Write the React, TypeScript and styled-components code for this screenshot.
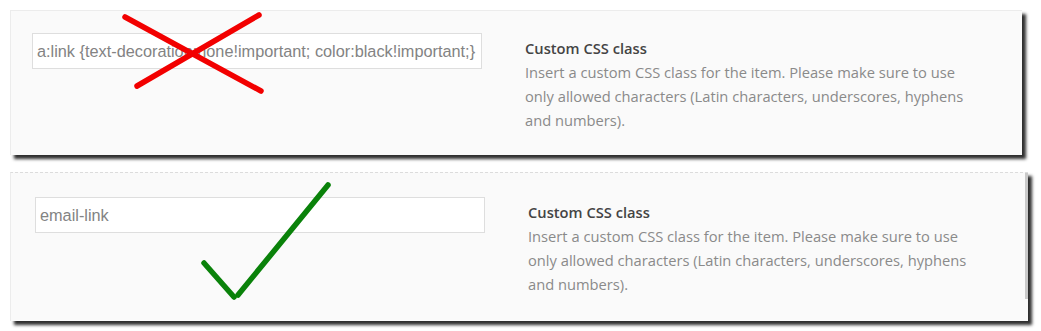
import React from "react";
import styled, { createGlobalStyle } from "styled-components";

const Global = createGlobalStyle`
  html, body { margin: 0; padding: 0; background: #ffffff; }
  body { width: 1041px; height: 331px; overflow: hidden; }
`;

const Page = styled.div`
  display: flex;
  flex-direction: column;
  padding: 10px 0 0 10px;
  gap: 17px;
`;

const Panel = styled.section<{ $w: number; $h: number; $dashed?: boolean }>`
  position: relative;
  box-sizing: border-box;
  width: ${(p) => p.$w}px;
  height: ${(p) => p.$h}px;
  background: #fafafa;
  border-left: 1px solid #ececec;
  border-top: ${(p) => (p.$dashed ? "1px dashed #dcdcdc" : "1px solid #ececec")};
  box-shadow: 4px 4px 3px rgba(10, 10, 10, 0.85);
  display: flex;
  align-items: flex-start;
  padding: ${(p) => (p.$dashed ? "24px 0 0 24px" : "22px 0 0 21px")};
  gap: 43px;
`;

const ScrollStrip = styled.div`
  position: absolute;
  right: 0;
  top: 0;
  width: 3px;
  height: 126px;
  background: #c9c9c9;
`;

const Field = styled.div`
  box-sizing: border-box;
  flex: none;
  width: 450px;
  height: 36px;
  background: #ffffff;
  border: 1px solid #dedede;
  display: flex;
  align-items: center;
  padding-left: 4px;
  font-family: "Liberation Sans", Arial, sans-serif;
  font-size: 16.3px;
  color: #838383;
  white-space: nowrap;
  overflow: hidden;
`;

const Info = styled.div<{ $top: number }>`
  margin-top: ${(p) => p.$top}px;
  width: 480px;
  font-family: "Open Sans", "Noto Sans", sans-serif;
  font-size: 14.7px;
  line-height: 24px;
  white-space: nowrap;
`;

const Title = styled.div`
  font-weight: 600;
  color: #444444;
`;

const Desc = styled.div`
  color: #8a8a8a;
`;

const Mark = styled.svg`
  position: absolute;
  left: 0;
  top: 0;
  overflow: visible;
  pointer-events: none;
`;

const InfoBlock = ({ top }: { top: number }) => (
  <Info $top={top}>
    <Title>Custom CSS class</Title>
    <Desc>
      Insert a custom CSS class for the item. Please make sure to use
      <br />
      only allowed characters (Latin characters, underscores, hyphens
      <br />
      and numbers).
    </Desc>
  </Info>
);

export default function App() {
  return (
    <>
      <Global />
      <Page>
        <Panel $w={1012} $h={145}>
          <Field>a:link {"{"}text-decoration:none!important; color:black!important;{"}"}</Field>
          <InfoBlock top={3} />
          <Mark width="1" height="1">
            <g stroke="#f20000" strokeWidth="5.5" strokeLinecap="round">
              <line x1="114" y1="6" x2="250" y2="80" />
              <line x1="126" y1="75" x2="248" y2="4" />
            </g>
          </Mark>
        </Panel>
        <Panel $w={1018} $h={149} $dashed>
          <Field>email-link</Field>
          <InfoBlock top={3} />
          <ScrollStrip />
          <Mark width="1" height="1">
            <g stroke="#0a820a" strokeWidth="5.5" strokeLinecap="round" fill="none">
              <line x1="193" y1="90" x2="223" y2="124" />
              <line x1="227" y1="122" x2="317" y2="12" />
            </g>
          </Mark>
        </Panel>
      </Page>
    </>
  );
}
